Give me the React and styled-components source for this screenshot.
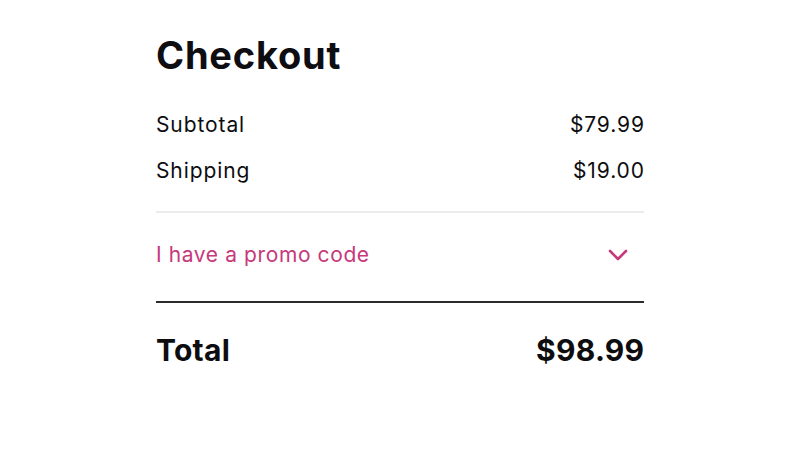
import styled, { createGlobalStyle } from "styled-components";

const GlobalStyle = createGlobalStyle`
    body {
        margin: 0;
        background: #ffffff;
        font-family: Inter, "Noto Sans", sans-serif;
        color: #0d0d12;
    }
`;

const Page = styled.div`
    width: 488px;
    margin: 0 auto;
    padding-top: 33px;
`;

const Title = styled.h1`
    margin: 0 0 34px;
    font-size: 38px;
    line-height: 44px;
    font-weight: 700;
    letter-spacing: 0.8px;
`;

const Lines = styled.div`
    display: flex;
    flex-direction: column;
    gap: 18px;
`;

const Row = styled.div`
    display: flex;
    justify-content: space-between;
    align-items: center;
    font-size: ${(p) => (p.$big ? "30px" : "21px")};
    line-height: ${(p) => (p.$big ? "36px" : "28px")};
    font-weight: ${(p) => (p.$big ? 700 : 400)};
    letter-spacing: ${(p) => (p.$big ? "0.25px" : "0.9px")};
    color: #0d0d10;

    span:last-child {
        margin-right: ${(p) => (p.$big ? "-0.25px" : "-0.9px")};
    }
`;

const Divider = styled.hr`
    margin: 0;
    border: none;
    height: 2px;
    background: ${(p) => (p.$strong ? "#2b2b2e" : "#ebebed")};
`;

const PromoToggle = styled.button`
    display: flex;
    width: 100%;
    justify-content: space-between;
    align-items: center;
    padding: 28px 16px 32px 0;
    border: none;
    background: none;
    cursor: pointer;
    font-family: inherit;
    font-size: 21px;
    line-height: 28px;
    letter-spacing: 0.6px;
    color: #c6397b;
`;

const TotalRow = styled(Row)`
    margin-top: 29px;
`;

function Chevron() {
    return (
        <svg width="20" height="12" viewBox="0 0 20 12" fill="none">
            <path
                d="M2 2l8 8 8-8"
                stroke="#c6397b"
                strokeWidth="2.6"
                strokeLinecap="round"
                strokeLinejoin="round"
            />
        </svg>
    );
}

export default function App() {
    return (
        <Page>
            <GlobalStyle />
            <Title>Checkout</Title>
            <Lines>
                <Row>
                    <span>Subtotal</span>
                    <span>$79.99</span>
                </Row>
                <Row>
                    <span>Shipping</span>
                    <span>$19.00</span>
                </Row>
            </Lines>
            <Divider style={{ marginTop: 26 }} />
            <PromoToggle>
                <span>I have a promo code</span>
                <Chevron />
            </PromoToggle>
            <Divider $strong />
            <TotalRow $big>
                <span>Total</span>
                <span>$98.99</span>
            </TotalRow>
        </Page>
    );
}
